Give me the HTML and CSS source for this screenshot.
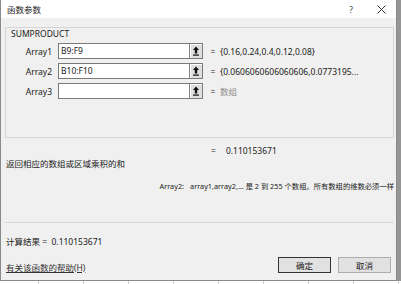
FILE: index.html
```html
<!DOCTYPE html>
<html lang="zh-CN">
<head>
    <meta charset="UTF-8">
    <title>函数参数</title>
    <link rel="stylesheet" href="styles.css">
</head>
<body>
    <div class="screen">
        <div class="dialog">
            <div class="titlebar">
                <span class="title">函数参数</span>
                <span class="ctrl">?</span>
                <span class="ctrl">
                    <svg width="9" height="9" viewBox="0 0 9 9"><path d="M0.5 0.5 L8.5 8.5 M8.5 0.5 L0.5 8.5" stroke="#333" stroke-width="1"/></svg>
                </span>
            </div>

            <div class="group">
                <div class="fname">SUMPRODUCT</div>
                <div class="args">
                    <div class="arg">
                        <span class="label">Array1</span>
                        <div class="field"><span class="text">B9:F9</span><span class="pick"><svg width="8" height="10" viewBox="0 0 8 10"><path d="M4 0.5 L1 4 H2.8 V7.5 H5.2 V4 H7 Z" fill="#111"/><rect x="1" y="8.5" width="6" height="1.2" fill="#111"/></svg></span></div>
                        <span class="eq">=</span>
                        <span class="value">{0.16,0.24,0.4,0.12,0.08}</span>
                    </div>
                    <div class="arg">
                        <span class="label">Array2</span>
                        <div class="field"><span class="text">B10:F10</span><span class="pick"><svg width="8" height="10" viewBox="0 0 8 10"><path d="M4 0.5 L1 4 H2.8 V7.5 H5.2 V4 H7 Z" fill="#111"/><rect x="1" y="8.5" width="6" height="1.2" fill="#111"/></svg></span></div>
                        <span class="eq">=</span>
                        <span class="value">{0.0606060606060606,0.0773195...</span>
                    </div>
                    <div class="arg">
                        <span class="label">Array3</span>
                        <div class="field"><span class="text"></span><span class="pick"><svg width="8" height="10" viewBox="0 0 8 10"><path d="M4 0.5 L1 4 H2.8 V7.5 H5.2 V4 H7 Z" fill="#111"/><rect x="1" y="8.5" width="6" height="1.2" fill="#111"/></svg></span></div>
                        <span class="eq">=</span>
                        <span class="value hint">数组</span>
                    </div>
                </div>
            </div>

            <div class="result"><span class="eq">=</span><span>0.110153671</span></div>
            <div class="desc">返回相应的数组或区域乘积的和</div>
            <div class="argdesc"><span class="argname">Array2:</span><span>array1,array2,... 是 2 到 255 个数组。所有数组的维数必须一样</span></div>

            <div class="sep"></div>

            <div class="calc">计算结果 =&nbsp;&nbsp;0.110153671</div>

            <div class="footer">
                <a class="helplink">有关该函数的帮助(H)</a>
                <button class="btn default">确定</button>
                <button class="btn">取消</button>
            </div>
        </div>
        <div class="strip"></div>
    </div>
</body>
</html>
```

FILE: styles.css
```css
body {
    margin: 0;
    width: 401px;
    height: 284px;
    overflow: hidden;
    background: repeating-linear-gradient(90deg, #fff 0 38px, #d0d0d0 38px 39px, #fff 39px 45px);
    font-family: "Noto Sans", "Noto Sans CJK SC", sans-serif;
    font-size: 8.5px;
    color: #1a1a1a;
}

.screen {
    display: flex;
    height: 281px;
}

.dialog {
    width: 397px;
    box-sizing: border-box;
    border: 1px solid #8a8a8a;
    border-top: 0;
    background: #f0f0f0;
    display: flex;
    flex-direction: column;
}

.strip {
    flex: 1;
    background: #959595;
}

.titlebar {
    height: 18px;
    background: #fff;
    display: flex;
    align-items: center;
    padding-left: 6px;
    flex-shrink: 0;
}

.title {
    flex: 1;
}

.ctrl {
    width: 30px;
    display: flex;
    justify-content: center;
    align-items: center;
    color: #444;
}

.group {
    margin: 9px 2px 0 4px;
    height: 111px;
    box-sizing: border-box;
    border: 1px solid #d6d6d6;
    flex-shrink: 0;
}

.fname {
    padding-left: 5px;
    margin-top: 1px;
    height: 10px;
    line-height: 10px;
}

.args {
    margin-top: 4px;
    display: flex;
    flex-direction: column;
    gap: 4px;
}

.arg {
    display: flex;
    align-items: center;
    height: 16px;
}

.label {
    width: 46px;
    text-align: right;
    margin-right: 6px;
}

.field {
    width: 145px;
    height: 16px;
    box-sizing: border-box;
    border: 1px solid #7a7a7a;
    background: #fff;
    display: flex;
}

.field .text {
    flex: 1;
    padding-left: 2px;
    line-height: 14px;
}

.pick {
    width: 12px;
    background: #dedede;
    border-left: 1px solid #808080;
    box-shadow: inset 1px 1px #fff;
    display: flex;
    justify-content: center;
    align-items: center;
}

.arg .eq {
    width: 8px;
    margin-left: 6px;
    text-align: center;
}

.arg .value {
    margin-left: 3px;
}

.hint {
    color: #8c8c8c;
}

.result {
    margin-top: 7px;
    padding-left: 210px;
    height: 12px;
    line-height: 12px;
    display: flex;
    gap: 10px;
}

.desc {
    margin-top: 1px;
    padding-left: 5px;
    height: 12px;
    line-height: 12px;
}

.argdesc {
    margin-top: 10px;
    padding-right: 2px;
    height: 12px;
    line-height: 12px;
    font-size: 7.3px;
    display: flex;
    justify-content: flex-end;
    gap: 6px;
    white-space: nowrap;
}

.sep {
    margin: 30px 2px 0 4px;
    height: 1px;
    background: #d6d6d6;
    flex-shrink: 0;
}

.calc {
    margin-top: 13px;
    padding-left: 5px;
    height: 12px;
    line-height: 12px;
}

.footer {
    margin-top: 9px;
    padding: 0 5px;
    display: flex;
    align-items: center;
    gap: 7px;
}

.helplink {
    flex: 1;
    color: #333;
    text-decoration: underline;
    margin-top: 3px;
}

.btn {
    width: 53px;
    height: 16px;
    padding: 0;
    font: inherit;
    color: #1a1a1a;
    background: #e1e1e1;
    border: 1px solid #adadad;
}

.btn.default {
    border-color: #333;
}
```
